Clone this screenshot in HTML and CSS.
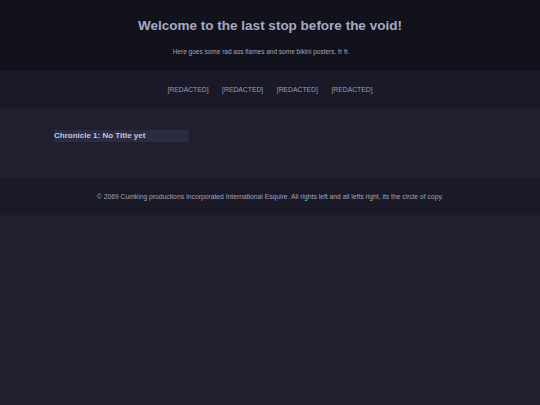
FILE: index.html
```html
<!DOCTYPE html>
<html>
<head>
<meta charset="utf-8">
<link rel="stylesheet" href="styles.css">
</head>
<body>
<header class="hero">
  <h1 class="hero-title">Welcome to the last stop before the void!</h1>
  <p class="hero-sub">Here goes some rad ass flames and some bikini posters. fr fr.</p>
</header>
<nav class="nav">
  <a class="nav-link">[REDACTED]</a>
  <a class="nav-link">[REDACTED]</a>
  <a class="nav-link">[REDACTED]</a>
  <a class="nav-link">[REDACTED]</a>
</nav>
<main class="main">
  <h2 class="chronicle">Chronicle 1: No Title yet</h2>
</main>
<footer class="footer">
  <p class="footer-text">© 2069 Cumking productions Incorporated International Esquire. All rights left and all lefts right, its the circle of copy.</p>
</footer>
</body>
</html>
```
FILE: styles.css
```css
html, body {
  margin: 0;
  padding: 0;
  background: #1f1f2f;
  font-family: "Liberation Sans", Arial, sans-serif;
}
.hero {
  background: #12121c;
  height: 71px;
  box-sizing: border-box;
  padding-top: 18px;
  text-align: center;
}
.hero-title {
  margin: 0;
  font-size: 13.5px;
  font-weight: bold;
  color: #a6a9c2;
  line-height: 16px;
}
.hero-sub {
  margin: 13.5px 0 0;
  padding-right: 18px;
  font-size: 6.5px;
  color: #a2a5bc;
  line-height: 8px;
}
.nav {
  background: #191927;
  height: 37px;
  display: flex;
  justify-content: center;
  align-items: center;
  gap: 13.5px;
}
.nav-link {
  font-size: 6.8px;
  color: #9c9fb6;
}
.main {
  height: 70px;
  box-sizing: border-box;
  padding: 22px 54px 0;
}
.chronicle {
  margin: 0;
  width: 135px;
  height: 12px;
  background: #2c2c40;
  font-size: 8px;
  line-height: 12px;
  font-weight: bold;
  color: #c3c6de;
}
.footer {
  background: #191927;
  height: 37px;
  display: flex;
  justify-content: center;
  align-items: center;
}
.footer-text {
  margin: 0;
  font-size: 6.75px;
  color: #a2a5bc;
}
```
